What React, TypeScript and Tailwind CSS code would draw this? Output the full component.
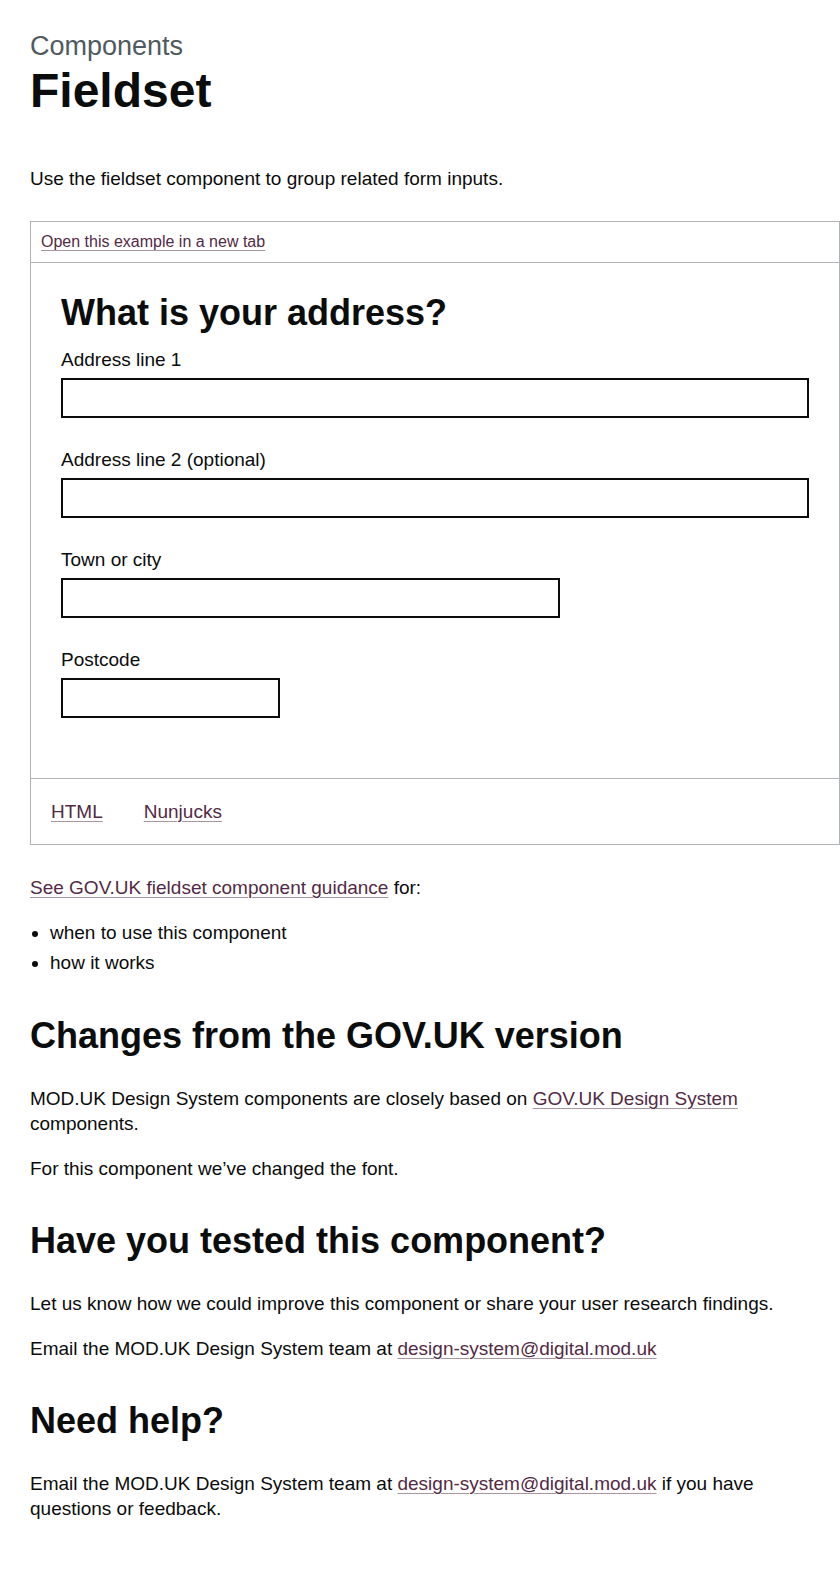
import React from "react";

const linkCls =
  "text-[#532a45] underline decoration-[#532a45]/50 decoration-1 underline-offset-[3px]";

function Field({ label, widthCls }: { label: string; widthCls: string }) {
  return (
    <div className="mb-[30px]">
      <label className="block text-[19px] leading-[23px] mb-[7px]">{label}</label>
      <input
        type="text"
        className={`block h-[40px] border-2 border-[#0b0c0c] bg-white outline-none ${widthCls}`}
      />
    </div>
  );
}

export default function App() {
  return (
    <div
      className="bg-white text-[#0b0c0c] pl-[30px] pt-[31px] pb-[70px]"
      style={{ fontFamily: '"Liberation Sans", Arial, sans-serif' }}
    >
      <span className="block text-[27px] leading-[30px] text-[#505a5f] mb-[5px]">Components</span>
      <h1 className="text-[48px] leading-[50px] font-bold mb-[50px]">Fieldset</h1>
      <p className="text-[19px] leading-[25px] mb-[30px]">
        Use the fieldset component to group related form inputs.
      </p>

      <div className="border border-[#b1b4b6]">
        <div className="h-[41px] border-b border-[#b1b4b6] px-[10px] flex items-center text-[16px] leading-[20px]">
          <a href="#" className="text-[#532a45] underline decoration-[#532a45]/50 decoration-1 underline-offset-[2.5px]">
            Open this example in a new tab
          </a>
        </div>
        <div className="px-[30px] pt-[30px] pb-[30px]">
          <h2 className="text-[36px] leading-[40px] font-bold mb-[15px]">What is your address?</h2>
          <Field label="Address line 1" widthCls="w-full" />
          <Field label="Address line 2 (optional)" widthCls="w-full" />
          <Field label="Town or city" widthCls="w-2/3" />
          <Field label="Postcode" widthCls="w-[219px]" />
        </div>
        <div className="border-t border-[#b1b4b6] flex text-[19px] leading-[25px]">
          <div className="pl-[20px] pr-[21px] py-[20px]">
            <a href="#" className={linkCls}>HTML</a>
          </div>
          <div className="px-[20px] py-[20px]">
            <a href="#" className={linkCls}>Nunjucks</a>
          </div>
        </div>
      </div>

      <p className="text-[19px] leading-[25px] mt-[30px] mb-[20px]">
        <a href="#" className={linkCls}>See GOV.UK fieldset component guidance</a> for:
      </p>
      <ul className="list-disc pl-[20px] text-[19px] leading-[25px]">
        <li className="mb-[5px]">when to use this component</li>
        <li>how it works</li>
      </ul>

      <h2 className="text-[36px] leading-[40px] font-bold mt-[41px] mb-[30px]">
        Changes from the GOV.UK version
      </h2>
      <p className="text-[19px] leading-[25px] mb-[20px]">
        MOD.UK Design System components are closely based on{" "}
        <a href="#" className={linkCls}>GOV.UK Design System</a> components.
      </p>
      <p className="text-[19px] leading-[25px]">For this component we’ve changed the font.</p>

      <h2 className="text-[36px] leading-[40px] font-bold mt-[40px] mb-[30px]">
        Have you tested this component?
      </h2>
      <p className="text-[19px] leading-[25px] mb-[20px]">
        Let us know how we could improve this component or share your user research findings.
      </p>
      <p className="text-[19px] leading-[25px]">
        Email the MOD.UK Design System team at{" "}
        <a href="#" className={linkCls}>design-system@digital.mod.uk</a>
      </p>

      <h2 className="text-[36px] leading-[40px] font-bold mt-[40px] mb-[30px]">Need help?</h2>
      <p className="text-[19px] leading-[25px]">
        Email the MOD.UK Design System team at{" "}
        <a href="#" className={linkCls}>design-system@digital.mod.uk</a> if you have questions or
        feedback.
      </p>
    </div>
  );
}
